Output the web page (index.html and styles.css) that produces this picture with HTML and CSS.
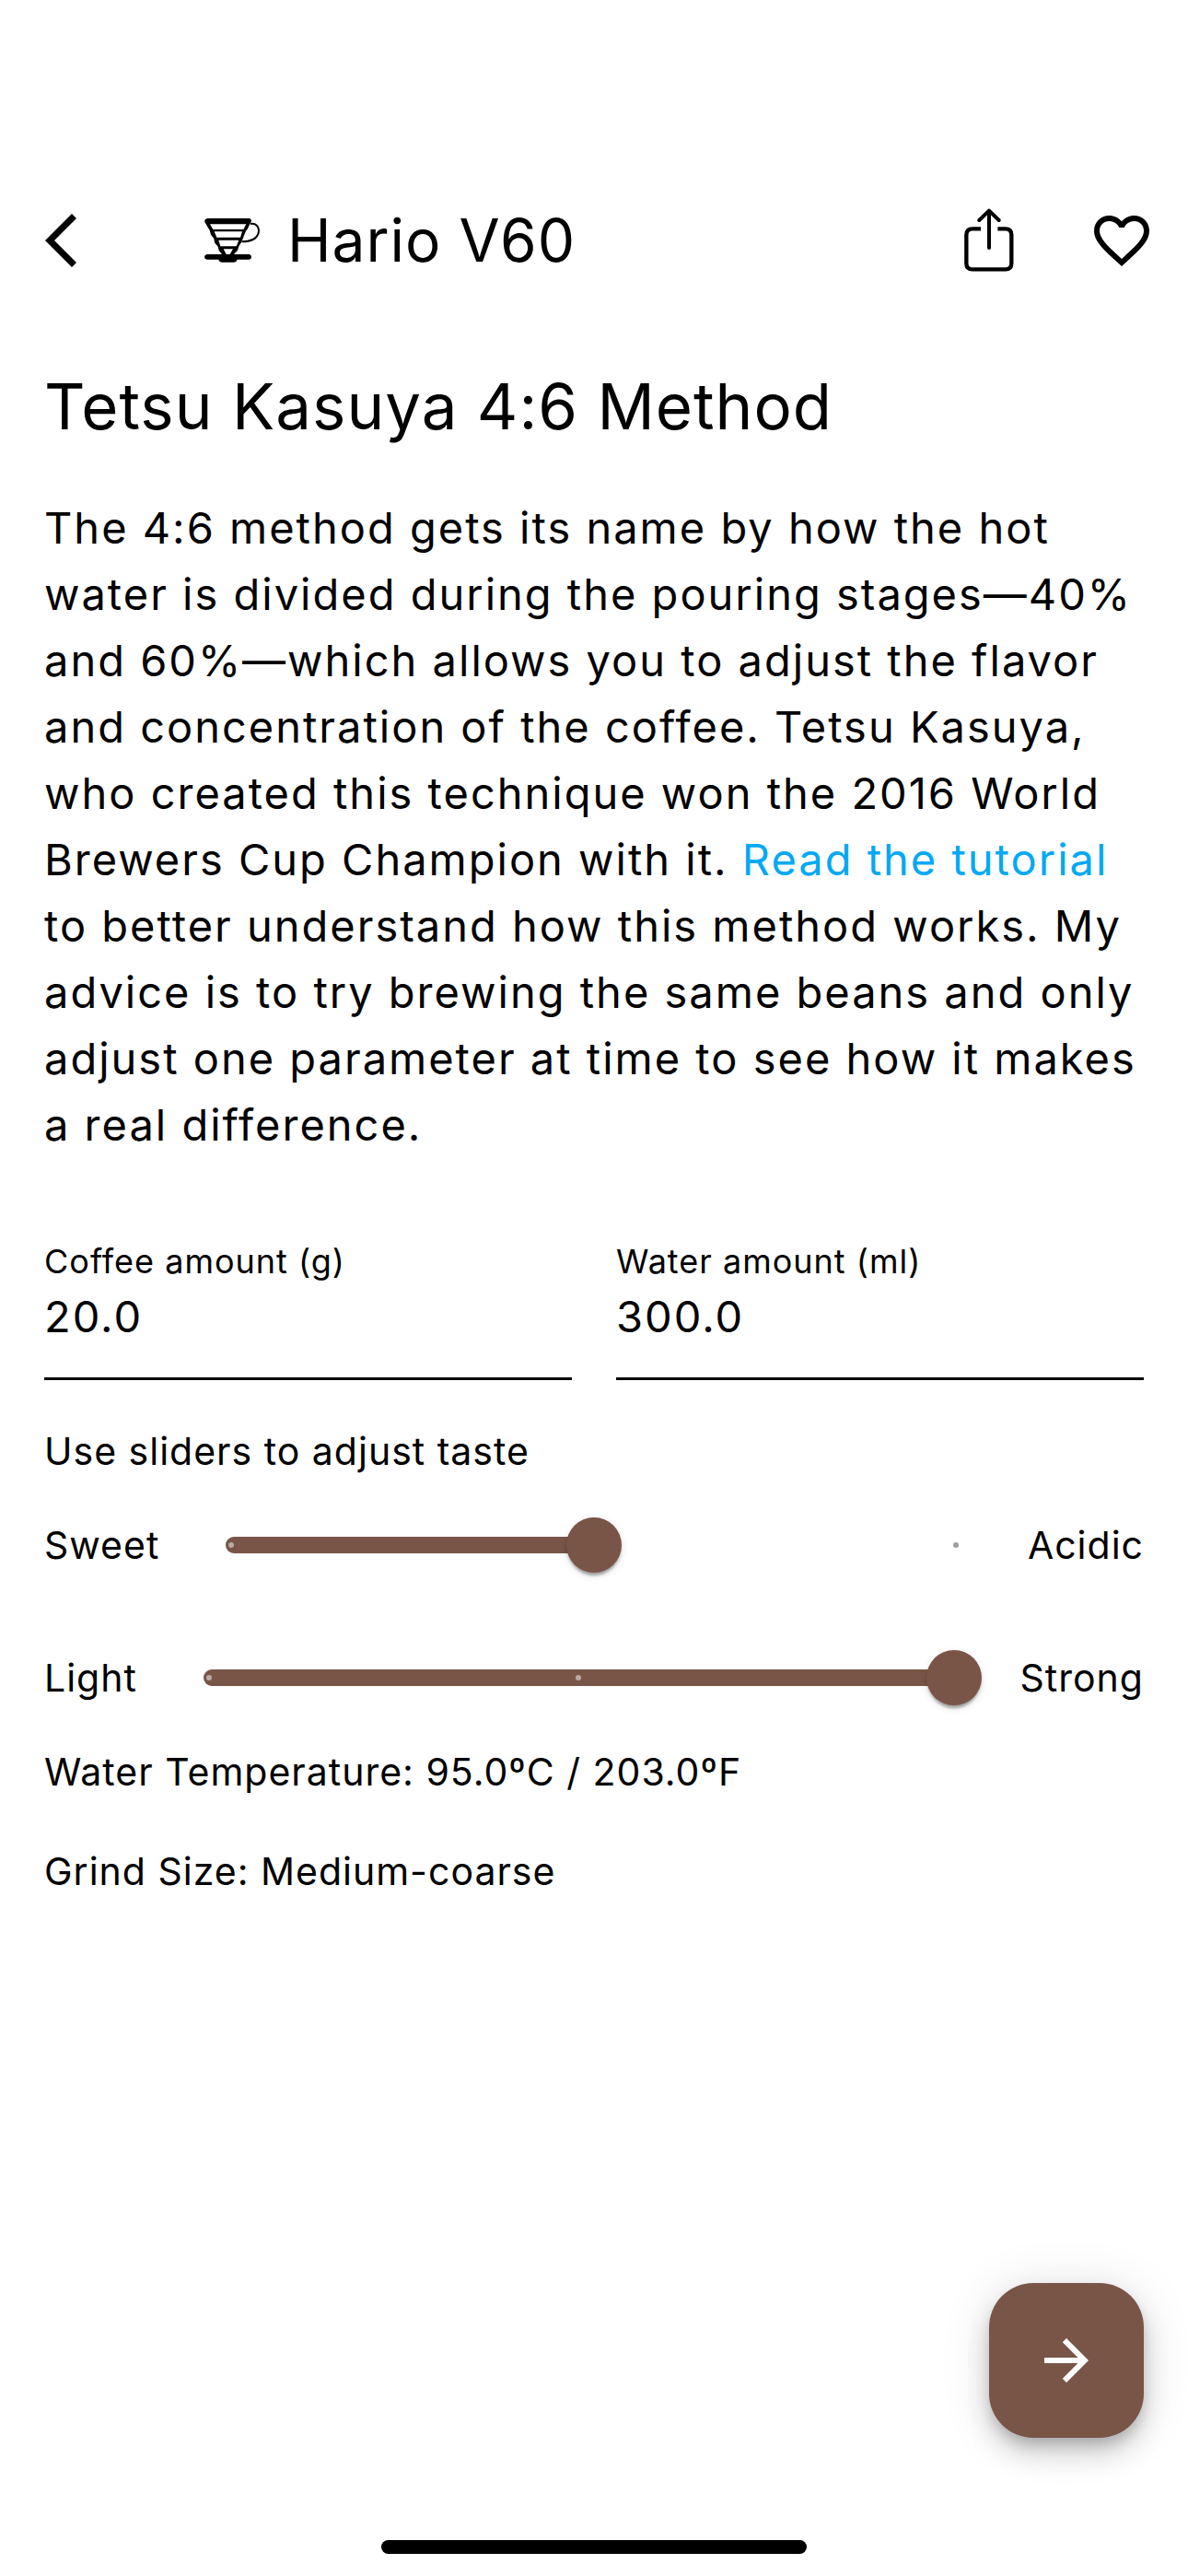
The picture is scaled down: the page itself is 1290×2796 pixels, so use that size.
FILE: index.html
```html
<!DOCTYPE html>
<html lang="en">
<head>
  <meta charset="utf-8">
  <meta name="viewport" content="width=device-width, initial-scale=1">
  <title>Tetsu Kasuya 4:6 Method</title>
  <link rel="stylesheet" href="styles.css">
</head>
<body>
  <div class="screen">
    <header class="app-bar">
      <button class="icon-button back" type="button" aria-label="Back">
        <svg width="34" height="58" viewBox="0 0 34 58" aria-hidden="true">
          <path d="M0 29 29 0l5 5-24 24 24 24-5 5z" fill="currentColor"/>
        </svg>
      </button>
      <div class="brand">
        <svg width="64" height="50" viewBox="60 48 192 150" aria-hidden="true">
          <path d="M75 51H211Q219 52 219 60L214 70 206 86 201 92 196 104 191 118 186 130 178 142 174 155 162 168H212Q219 170 219 177T212 185H173Q171 194 160 194H125Q114 194 112 185H74Q66 184 66 177T74 168H123L113 155 110 143 99 130 97 117 87 104 83 90 76 78 67 63Q65 53 75 51z" fill="currentColor"/>
          <path d="M84 70H202L193 87H94zM98 94H189L183 113H106zM112 122H178L170 142H118zM128 151H159L149 168H137z" fill="#fff"/>
          <path d="M216 69C236 66 246 82 242 98 237 118 216 127 188 127" fill="none" stroke="currentColor" stroke-width="6"/>
        </svg>
        <span class="brand-name">Hario V60</span>
      </div>
      <button class="icon-button" type="button" aria-label="Share">
        <svg width="60" height="72" viewBox="71 45 180 216" fill="none" stroke="currentColor" aria-hidden="true">
          <path d="M134 115H107Q87 115 87 135V227Q87 247 107 247H214Q234 247 234 227V135Q234 115 214 115H189" stroke-width="13"/>
          <path d="M161 58V177M129 87 161 56 193 87" stroke-width="12" stroke-linecap="round" stroke-linejoin="round"/>
        </svg>
      </button>
      <button class="icon-button" type="button" aria-label="Favorite">
        <svg width="72" height="72" viewBox="0 0 24 24" aria-hidden="true">
          <path fill="currentColor" d="M16.5 3c-1.74 0-3.41.81-4.5 2.09C10.91 3.81 9.24 3 7.5 3 4.42 3 2 5.42 2 8.5c0 3.78 3.4 6.86 8.55 11.54L12 21.35l1.45-1.32C18.6 15.36 22 12.28 22 8.5 22 5.42 19.58 3 16.5 3zm-4.4 15.55-.1.1-.1-.1C7.14 14.24 4 11.39 4 8.5 4 6.5 5.5 5 7.5 5c1.54 0 3.04.99 3.57 2.36h1.87C13.46 5.99 14.96 5 16.5 5c2 0 3.5 1.5 3.5 3.5 0 2.89-3.14 5.74-7.9 10.05z"/>
        </svg>
      </button>
    </header>

    <main class="content">
      <h1 class="title">Tetsu Kasuya 4:6 Method</h1>
      <p class="description">The 4:6 method gets its name by how the hot water is divided during the pouring stages—40% and 60%—which allows you to adjust the flavor and concentration of the coffee. Tetsu Kasuya, who created this technique won the 2016 World Brewers Cup Champion with it. <a class="link" href="#tutorial">Read the tutorial</a> to better understand how this method works. My advice is to try brewing the same beans and only adjust one parameter at time to see how it makes a real difference.</p>

      <div class="amounts">
        <div class="field">
          <label class="field-label" for="coffee">Coffee amount (g)</label>
          <input class="field-input" id="coffee" type="text" inputmode="decimal" value="20.0">
        </div>
        <div class="field">
          <label class="field-label" for="water">Water amount (ml)</label>
          <input class="field-input" id="water" type="text" inputmode="decimal" value="300.0">
        </div>
      </div>

      <p class="text">Use sliders to adjust taste</p>
      <div class="slider-row">
        <label class="slider-label" for="taste">Sweet</label>
        <div class="slider">
          <span class="track" style="width: 50%"></span>
          <span class="ticks"><i class="tick"></i><i class="tick"></i><i class="tick tick-off"></i></span>
          <input class="range" id="taste" type="range" min="0" max="2" step="1" value="1">
        </div>
        <span class="slider-label">Acidic</span>
      </div>
      <div class="slider-row">
        <label class="slider-label" for="strength">Light</label>
        <div class="slider">
          <span class="track" style="width: 100%"></span>
          <span class="ticks"><i class="tick"></i><i class="tick"></i><i class="tick"></i></span>
          <input class="range" id="strength" type="range" min="0" max="2" step="1" value="2">
        </div>
        <span class="slider-label">Strong</span>
      </div>
      <p class="text">Water Temperature: 95.0ºC / 203.0ºF</p>
      <p class="text spaced">Grind Size: Medium-coarse</p>
    </main>

    <button class="next" type="button" aria-label="Next">
      <svg width="72" height="72" viewBox="0 0 24 24" aria-hidden="true">
        <path fill="currentColor" d="m12 4-1.41 1.41L16.17 11H4v2h12.17l-5.58 5.59L12 20l8-8z"/>
      </svg>
    </button>
    <div class="home-indicator"></div>
  </div>
</body>
</html>
```

FILE: styles.css
```css
* {
  box-sizing: border-box;
}

/* Type is lightly tracked; body-large text is tracked a step wider */
body {
  margin: 0;
  background: #fff;
  color: #000;
  font-family: Inter, Roboto, "Liberation Sans", sans-serif;
  font-size: 41px;
  line-height: 60px;
  letter-spacing: 1px;
}

button {
  border: 0;
  padding: 0;
  background: none;
  color: inherit;
  font: inherit;
}

svg {
  display: block;
}

.screen {
  display: flex;
  flex-direction: column;
  min-height: 100vh;
}

/* App bar, below the status bar area */
.app-bar {
  display: flex;
  align-items: center;
  padding-top: 177px;
}

.icon-button {
  display: flex;
  align-items: center;
  justify-content: center;
  width: 144px;
  height: 168px;
}

.back {
  justify-content: flex-start;
  padding-left: 49px;
}

.brand {
  display: flex;
  flex: 1;
  align-items: center;
  gap: 28px;
  padding-left: 76px;
}

.brand-name {
  font-size: 64px;
  line-height: 84px;
}

.content {
  padding: 48px 48px 0;
}

.title {
  margin: 0;
  font-size: 69px;
  font-weight: 400;
  line-height: 96px;
}

.description {
  margin: 48px 0 88px;
  font-size: 47px;
  line-height: 72px;
  letter-spacing: 2px;
}

.link {
  color: #03a9f4;
  text-decoration: none;
}

.amounts {
  display: grid;
  grid-template-columns: 1fr 1fr;
  gap: 48px;
  margin-bottom: 47px;
}

.field {
  display: flex;
  flex-direction: column;
  border-bottom: 3px solid #000;
  padding-bottom: 30px;
}

.field-label {
  font-size: 36px;
  line-height: 48px;
}

.field-input {
  width: 100%;
  height: 72px;
  border: 0;
  padding: 0;
  background: none;
  color: inherit;
  font: inherit;
  font-size: 47px;
  line-height: 72px;
  letter-spacing: 2px;
  outline: 0;
}

.text {
  margin: 0;
}

.spaced {
  margin-top: 48px;
}

.slider-row {
  display: flex;
  align-items: center;
  gap: 72px;
  height: 144px;
}

.slider {
  position: relative;
  flex: 1;
  height: 60px;
}

.track {
  position: absolute;
  top: 21px;
  left: 0;
  height: 18px;
  border-radius: 9px;
  background: #795548;
}

.ticks {
  position: absolute;
  top: 27px;
  right: 3px;
  left: 3px;
  display: flex;
  justify-content: space-between;
}

.tick {
  width: 6px;
  height: 6px;
  border-radius: 50%;
  background: #bcaaa4;
}

.tick-off {
  background: #9e9e9e;
}

/* The thumb's centre runs from one end of the track to the other */
.range {
  position: absolute;
  top: 0;
  left: -30px;
  width: calc(100% + 60px);
  height: 60px;
  margin: 0;
  appearance: none;
  background: none;
}

.range::-webkit-slider-thumb {
  appearance: none;
  width: 60px;
  height: 60px;
  border: 0;
  border-radius: 50%;
  background: #795548;
  box-shadow: 0 6px 3px -3px rgba(0, 0, 0, 0.2), 0 3px 3px rgba(0, 0, 0, 0.14), 0 3px 9px rgba(0, 0, 0, 0.12);
}

.next {
  display: flex;
  align-items: center;
  justify-content: center;
  align-self: flex-end;
  width: 168px;
  height: 168px;
  margin: auto 48px 111px 0;
  border-radius: 48px;
  background: #795548;
  color: #fff;
  box-shadow: 0 9px 15px -3px rgba(0, 0, 0, 0.2), 0 18px 30px rgba(0, 0, 0, 0.14), 0 3px 54px rgba(0, 0, 0, 0.12);
}

.home-indicator {
  align-self: center;
  width: 462px;
  height: 15px;
  margin-bottom: 24px;
  border-radius: 8px;
  background: #000;
}
```
